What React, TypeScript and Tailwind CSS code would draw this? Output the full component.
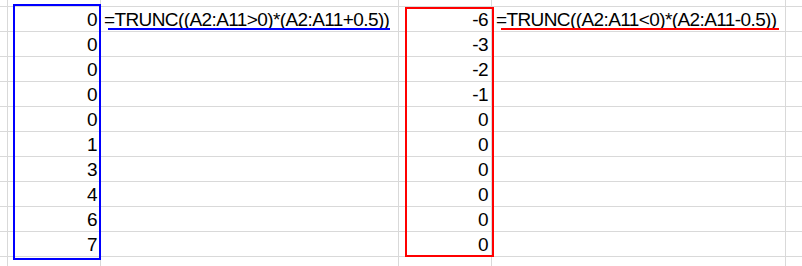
import React from "react";

const left = ["0", "0", "0", "0", "0", "1", "3", "4", "6", "7"];
const right = ["-6", "-3", "-2", "-1", "0", "0", "0", "0", "0", "0"];

function Row({ a, b, fa, fb }: { a: string; b: string; fa?: string; fb?: string }) {
  return (
    <div className="flex h-[25px] border-b border-[#d9d9d9]">
      <div className="w-[8px] shrink-0 border-r border-[#d9d9d9]" />
      <div className="w-[93px] shrink-0 border-r border-[#d9d9d9] flex items-end justify-end pr-[3px] pb-px leading-[20px]">
        {a}
      </div>
      <div className="w-[298px] shrink-0 border-r border-[#d9d9d9] flex items-end pl-[3px] pb-px leading-[20px] whitespace-nowrap">
        {fa}
      </div>
      <div className="w-[93px] shrink-0 border-r border-[#d9d9d9] flex items-end justify-end pr-[3px] pb-px leading-[20px]">
        {b}
      </div>
      <div className="w-[294px] shrink-0 border-r border-[#d9d9d9] flex items-end pl-[4px] pb-px leading-[20px] whitespace-nowrap">
        {fb}
      </div>
      <div className="flex-1" />
    </div>
  );
}

export default function App() {
  return (
    <div
      className="relative w-[802px] h-[266px] bg-white overflow-hidden text-[19px] tracking-[-0.6px] text-black"
      style={{ fontFamily: '"Liberation Sans", Arial, sans-serif' }}
    >
      <div className="flex h-[7px] border-b border-[#d9d9d9]">
        <div className="w-[8px] shrink-0 border-r border-[#d9d9d9]" />
        <div className="w-[93px] shrink-0 border-r border-[#d9d9d9]" />
        <div className="w-[298px] shrink-0 border-r border-[#d9d9d9]" />
        <div className="w-[93px] shrink-0 border-r border-[#d9d9d9]" />
        <div className="w-[294px] shrink-0 border-r border-[#d9d9d9]" />
        <div className="flex-1" />
      </div>
      {left.map((a, i) => (
        <Row
          key={i}
          a={a}
          b={right[i]}
          fa={i === 0 ? "=TRUNC((A2:A11>0)*(A2:A11+0.5))" : undefined}
          fb={i === 0 ? "=TRUNC((A2:A11<0)*(A2:A11-0.5))" : undefined}
        />
      ))}
      <div className="flex h-[9px]">
        <div className="w-[8px] shrink-0 border-r border-[#d9d9d9]" />
        <div className="w-[93px] shrink-0 border-r border-[#d9d9d9]" />
        <div className="w-[298px] shrink-0 border-r border-[#d9d9d9]" />
        <div className="w-[93px] shrink-0 border-r border-[#d9d9d9]" />
        <div className="w-[294px] shrink-0 border-r border-[#d9d9d9]" />
        <div className="flex-1" />
      </div>

      {/* annotation overlays */}
      <div className="absolute left-[13px] top-[4px] w-[88px] h-[256px] border-2 border-[#0000ff]" />
      <div className="absolute left-[108px] top-[28px] w-[282px] h-[2px] bg-[#0000ff]" />
      <div className="absolute left-[405px] top-[7px] w-[89px] h-[250px] border-2 border-[#ff0000]" />
      <div className="absolute left-[501px] top-[28px] w-[278px] h-[2px] bg-[#ff0000]" />
    </div>
  );
}
